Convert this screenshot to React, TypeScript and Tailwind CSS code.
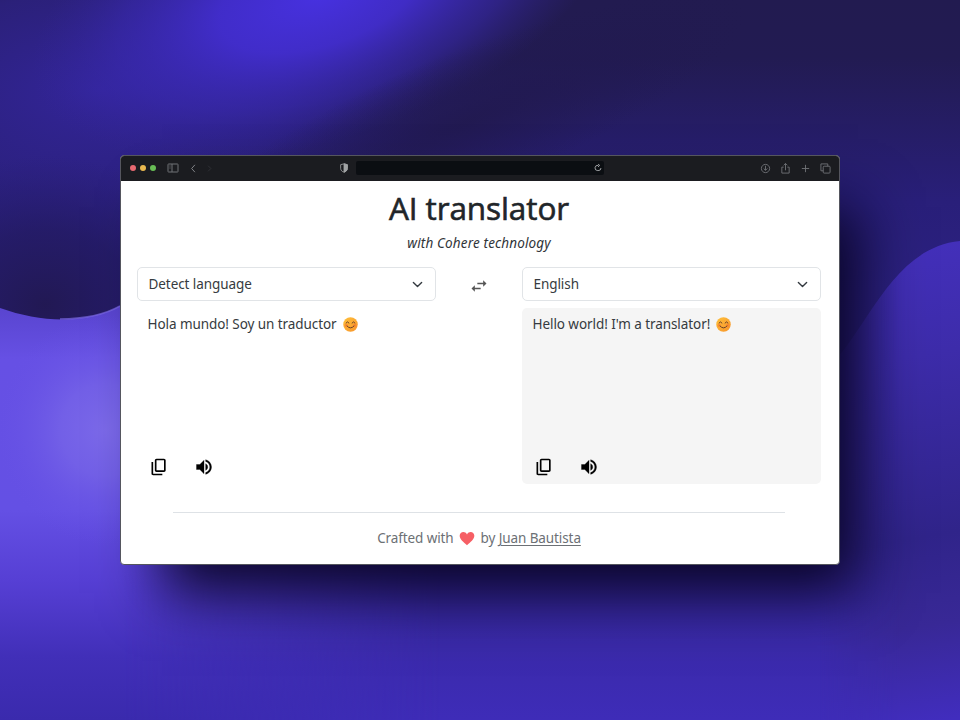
import React from "react";

function Backdrop() {
  return (
    <svg className="absolute inset-0" width="960" height="720" viewBox="0 0 960 720" aria-hidden="true">
      <defs>
        <linearGradient id="base" x1="0" y1="0" x2="0" y2="1">
          <stop offset="0" stopColor="#221b50" />
          <stop offset="0.08" stopColor="#221b52" />
          <stop offset="0.28" stopColor="#291f7a" />
          <stop offset="0.7" stopColor="#33268f" />
          <stop offset="1" stopColor="#3e2cb8" />
        </linearGradient>
        <radialGradient id="streak" gradientUnits="userSpaceOnUse" cx="0" cy="0" r="1" gradientTransform="translate(320 -5) rotate(-18) scale(300 145)">
          <stop offset="0" stopColor="#4731e0" />
          <stop offset="0.35" stopColor="#432ed2" stopOpacity="0.9" />
          <stop offset="0.7" stopColor="#3b2ab8" stopOpacity="0.5" />
          <stop offset="1" stopColor="#33259a" stopOpacity="0" />
        </radialGradient>
        <radialGradient id="leftGlow" gradientUnits="userSpaceOnUse" cx="0" cy="0" r="1" gradientTransform="translate(100 90) scale(340 180)">
          <stop offset="0" stopColor="#33259a" />
          <stop offset="0.55" stopColor="#2e2288" stopOpacity="0.75" />
          <stop offset="1" stopColor="#2b207e" stopOpacity="0" />
        </radialGradient>
        <radialGradient id="leftDark" gradientUnits="userSpaceOnUse" cx="0" cy="0" r="1" gradientTransform="translate(45 305) scale(180 150)">
          <stop offset="0" stopColor="#211851" stopOpacity="0.95" />
          <stop offset="0.5" stopColor="#231a61" stopOpacity="0.75" />
          <stop offset="1" stopColor="#261c70" stopOpacity="0" />
        </radialGradient>
        <radialGradient id="centerDark" gradientUnits="userSpaceOnUse" cx="0" cy="0" r="1" gradientTransform="translate(470 120) rotate(-22) scale(300 70)">
          <stop offset="0" stopColor="#21194f" stopOpacity="0.9" />
          <stop offset="1" stopColor="#21194f" stopOpacity="0" />
        </radialGradient>
        <linearGradient id="lobe" x1="0" y1="300" x2="0" y2="720" gradientUnits="userSpaceOnUse">
          <stop offset="0" stopColor="#5743cc" />
          <stop offset="0.14" stopColor="#6650e4" />
          <stop offset="0.5" stopColor="#6450e4" />
          <stop offset="0.67" stopColor="#563fd4" />
          <stop offset="0.85" stopColor="#412fb8" />
          <stop offset="1" stopColor="#3a2aad" />
        </linearGradient>
        <radialGradient id="lobeLight" gradientUnits="userSpaceOnUse" cx="0" cy="0" r="1" gradientTransform="translate(105 430) scale(110 115)">
          <stop offset="0" stopColor="#7d6bea" stopOpacity="0.95" />
          <stop offset="0.4" stopColor="#7765e8" stopOpacity="0.75" />
          <stop offset="1" stopColor="#6650e6" stopOpacity="0" />
        </radialGradient>
        <linearGradient id="right" x1="870" y1="240" x2="950" y2="720" gradientUnits="userSpaceOnUse">
          <stop offset="0" stopColor="#4430bc" />
          <stop offset="0.25" stopColor="#3d2caa" />
          <stop offset="0.62" stopColor="#30248a" />
          <stop offset="0.8" stopColor="#382896" />
          <stop offset="1" stopColor="#412dbe" />
        </linearGradient>
        <linearGradient id="fadeX" x1="0" y1="0" x2="1" y2="0">
          <stop offset="0" stopColor="#fff" />
          <stop offset="0.28" stopColor="#fff" />
          <stop offset="0.65" stopColor="#777" />
          <stop offset="1" stopColor="#000" />
        </linearGradient>
        <mask id="lobeMask" maskUnits="userSpaceOnUse" x="0" y="0" width="440" height="720"><rect width="440" height="720" fill="url(#fadeX)" /></mask>
        <linearGradient id="rightFade" x1="820" y1="0" x2="900" y2="0" gradientUnits="userSpaceOnUse">
          <stop offset="0" stopColor="#000" />
          <stop offset="1" stopColor="#fff" />
        </linearGradient>
        <mask id="rightMask" maskUnits="userSpaceOnUse" x="820" y="200" width="140" height="520"><rect x="820" y="200" width="140" height="520" fill="url(#rightFade)" /></mask>
      </defs>
      <rect width="960" height="720" fill="url(#base)" />
      <rect width="960" height="400" fill="url(#leftGlow)" />
      <rect width="960" height="400" fill="url(#streak)" />
      <rect width="960" height="400" fill="url(#centerDark)" />
      <rect width="960" height="480" fill="url(#leftDark)" />
      <g mask="url(#lobeMask)">
        <path d="M0 308C42 323 86 324 120 306V280H440V720H0Z" fill="url(#lobe)" />
        <rect y="315" width="300" height="265" fill="url(#lobeLight)" />
      </g>
      <path d="M60 319C82 319 104 315 120 306" fill="none" stroke="#7c6ae6" strokeWidth="1.5" opacity="0.7" />
      <g mask="url(#rightMask)">
        <path d="M820 375C865 340 888 248 960 241V720H820Z" fill="url(#right)" />
      </g>
    </svg>
  );
}

function Glyph({ size, children, className = "" }: { size: number; children: React.ReactNode; className?: string }) {
  return (
    <svg width={size} height={size} viewBox="0 0 24 24" className={`shrink-0 ${className}`} fill="none" stroke="currentColor" strokeWidth="2">
      {children}
    </svg>
  );
}

function TitleBar() {
  return (
    <header className="flex h-[25px] shrink-0 items-center bg-[#1b1c20] pb-px text-[#707276]">
      <div className="ml-[9px] flex w-[26px] justify-between">
        <i className="size-[6px] rounded-full bg-[#e76970]" />
        <i className="size-[6px] rounded-full bg-[#e9b84f]" />
        <i className="size-[6px] rounded-full bg-[#68bd55]" />
      </div>
      <Glyph size={12} className="ml-[11px]">
        <rect x="2" y="4" width="20" height="16" rx="1" />
        <path d="M10 4v16M5 8h2M5 12h2" />
      </Glyph>
      <Glyph size={11} className="ml-[9px] text-[#8b8d91]"><path d="m15 4-7 8 7 8" /></Glyph>
      <Glyph size={11} className="ml-[5px] text-[#303237]"><path d="m9 6 6 6-6 6" /></Glyph>
      <Glyph size={10} className="ml-[124px] text-[#a1a3a5]">
        <path d="M12 2 4 4v9c0 5 4 8 8 9 4-1 8-4 8-9V4Z" />
        <path d="M12 2v20c4-1 8-4 8-9V4Z" fill="currentColor" />
      </Glyph>
      <div className="ml-[7px] flex h-[14px] w-[248px] items-center justify-end rounded-[2px] bg-[#0b0e12] pr-[2px]">
        <Glyph size={8} className="text-[#b5b7b9]"><path d="M13 4a9 8 0 1 0 8 8M12 0l5 4-5 5" strokeWidth="2.5" /></Glyph>
      </div>
      <div className="ml-auto mr-[8px] flex items-center gap-[9px]">
        <Glyph size={11}><circle cx="12" cy="12" r="9" /><path d="M12 6v10m-4-4 4 4 4-4" /></Glyph>
        <Glyph size={11}><path d="M8 9H4v13h16V9h-4M12 16V1M8 5l4-4 4 4" /></Glyph>
        <Glyph size={11}><path d="M12 4v16M4 12h16" /></Glyph>
        <Glyph size={11}><rect x="7" y="7" width="15" height="15" rx="2" /><path d="M17 7V2H2v15h5" /></Glyph>
      </div>
    </header>
  );
}

function LanguageSelect({ label }: { label: string }) {
  return (
    <button className="flex h-[34px] w-full items-center justify-between rounded-[5px] border border-[#e1e4e7] bg-white pl-[10.500px] pr-[12px]">
      <span>{label}</span>
      <svg width="11" height="11" viewBox="0 0 16 16" fill="none" stroke="#343a40" strokeWidth="2" strokeLinecap="round" strokeLinejoin="round">
        <path d="m2 5 6 6 6-6" />
      </svg>
    </button>
  );
}

function Smile() {
  return (
    <svg className="ml-[6px] shrink-0" width="15" height="15" viewBox="0 0 30 30">
      <defs>
        <linearGradient id="smile" x1="0" y1="0" x2="1" y2="1"><stop stopColor="#ffc13b" /><stop offset="1" stopColor="#f7932a" /></linearGradient>
      </defs>
      <circle cx="15" cy="15" r="14.500" fill="url(#smile)" />
      <circle cx="6.500" cy="17" r="3.500" fill="#fa8030" opacity=".7" />
      <circle cx="23.500" cy="17" r="3.500" fill="#fa8030" opacity=".7" />
      <path d="M6 12q3-5 6 0M18 12q3-5 6 0M8 18q7 8 14 0" fill="none" stroke="#68402a" strokeWidth="2" strokeLinecap="round" />
    </svg>
  );
}

function TranslationBox({ text, tone }: { text: string; tone: string }) {
  return (
    <section className={`flex h-[176px] flex-col justify-between rounded-[5px] pl-[10.500px] pt-[6px] ${tone}`}>
      <p className="flex h-[21px] items-center whitespace-nowrap"><span>{text}</span><Smile /></p>
      <div className="mb-[7px] flex gap-[25px] pl-[1.500px] text-black">
        <svg width="20" height="20" viewBox="0 0 24 24" fill="currentColor">
          <path d="M9 18q-.825 0-1.412-.587T7 16V4q0-.825.588-1.412T9 2h9q.825 0 1.413.588T20 4v12q0 .825-.587 1.413T18 18zm0-2h9V4H9zm-4 6q-.825 0-1.412-.587T3 20V6h2v14h11v2z" />
        </svg>
        <svg width="20" height="20" viewBox="0 0 24 24" fill="currentColor">
          <path d="M3 9v6h4l5 5V4L7 9H3zm13.500 3A4.500 4.500 0 0 0 14 7.970v8.050c1.480-.73 2.500-2.250 2.500-4.020zM14 3.230v2.060c2.890.86 5 3.540 5 6.710s-2.110 5.850-5 6.710v2.060c4.010-.91 7-4.490 7-8.770s-2.990-7.860-7-8.770z" stroke="currentColor" strokeWidth=".4" />
        </svg>
      </div>
    </section>
  );
}

export default function App() {
  return (
    <main className="relative flex h-[720px] w-[960px] items-start justify-center overflow-hidden bg-[#281f78] pt-[155px] font-['Noto_Sans','Open_Sans',sans-serif] text-[13.500px] text-[#363b40]">
      <Backdrop />
      <div className="relative flex h-[410px] w-[720px] flex-col overflow-hidden rounded-[4px] border border-[#55565e] bg-white shadow-[30px_40px_56px_-12px_rgba(4,0,25,0.9)]">
        <TitleBar />
        <h1 className="mr-[2px] mt-[6px] text-center font-['Open_Sans',sans-serif] text-[31.500px] font-normal leading-[42px] tracking-[-0.1px] text-[#212529] [-webkit-text-stroke:0.6px_#212529]">
          AI translator
        </h1>
        <p className="mr-[2px] mt-[3px] text-center text-[13.500px] italic leading-[22px] tracking-[0.15px] text-[#303438]">with Cohere technology</p>
        <div className="mt-[13px] grid grid-cols-[299px_86px_299px] pl-[16px] tracking-[-0.07px]">
          <div className="flex flex-col gap-[7px]">
            <LanguageSelect label="Detect language" />
            <TranslationBox text="Hola mundo! Soy un traductor" tone="bg-white" />
          </div>
          <div className="flex h-[37px] items-center justify-center text-[#555]">
            <svg width="20" height="20" viewBox="0 0 24 24" fill="currentColor">
              <path d="M6.990 11 3 15l3.990 4v-3H14v-2H6.990v-3zM21 9l-3.990-4v3H10v2h7.010v3L21 9z" />
            </svg>
          </div>
          <div className="flex flex-col gap-[7px]">
            <LanguageSelect label="English" />
            <TranslationBox text="Hello world! I'm a translator!" tone="bg-[#f5f5f5]" />
          </div>
        </div>
        <footer className="ml-[52px] mr-[54px] mt-[28px] flex justify-center border-t border-[#dee2e6] pt-[14px] leading-[22px] tracking-[-0.1px] text-[#6c7075]">
          <span>Crafted with</span>
          <svg className="ml-[5px] mr-[6px] mt-[4px]" width="16" height="15" viewBox="0 0 24 22">
            <path d="M12 21C7 17 1 12 1 7c0-6 8-8 11-2 3-6 11-4 11 2 0 5-6 10-11 14Z" fill="#f65f65" />
          </svg>
          <span>by <a className="underline underline-offset-2">Juan Bautista</a></span>
        </footer>
      </div>
    </main>
  );
}
